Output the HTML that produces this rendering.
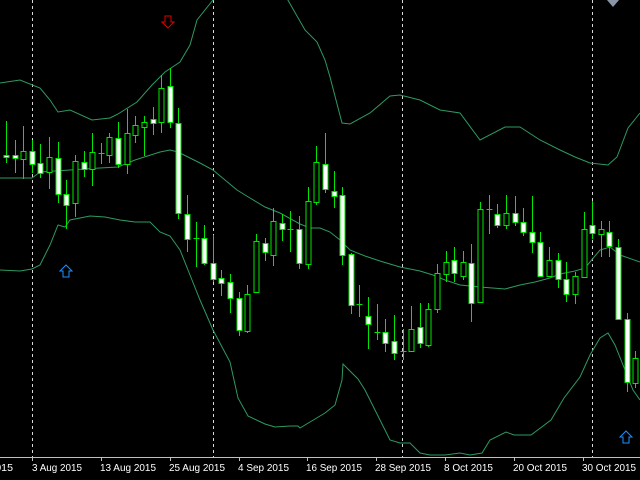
<!DOCTYPE html>
<html><head><meta charset="utf-8"><style>
html,body{margin:0;padding:0;background:#000;width:640px;height:480px;overflow:hidden}
svg{display:block}
text{font-family:"Liberation Sans",sans-serif;font-size:10.5px;fill:#fff}
</style></head><body>
<svg id="s" width="640" height="480" xmlns="http://www.w3.org/2000/svg" shape-rendering="crispEdges">
<rect width="640" height="480" fill="#000"/>
<g stroke="#d8d8d8" stroke-width="1" stroke-dasharray="3,3">
<line x1="32.5" y1="0" x2="32.5" y2="457"/>
<line x1="213.5" y1="0" x2="213.5" y2="457"/>
<line x1="402.5" y1="0" x2="402.5" y2="457"/>
<line x1="592.5" y1="0" x2="592.5" y2="457"/>
</g>
<g fill="none" stroke="#2e9a60" stroke-width="1" shape-rendering="auto">
<polyline points="0,83 20,80 40,88 50,100 58,112 70,110 92,120 110,118 118,114 137,102 152,85 165,72 180,62 190,45 197,20 213,0 225,-5 285,-5 305,30 317,42 325,60 330,77 342,123 350,124 370,113 390,96 400,95 420,100 440,110 460,113 480,140 505,127 520,127 540,140 560,150 575,157 590,163 608,165 617,157 628,128 640,113"/>
<polyline points="0,178 32,178 40,172 70,170 100,168 118,167 135,160 160,152 170,150 178,152 200,163 213,170 225,180 237,190 250,198 265,207 280,213 300,224 310,228 320,228 330,232 340,240 350,250 365,256 380,261 400,267 420,271 433,275 445,280 460,285 480,287 505,289 520,285 535,282 550,278 560,274 575,271 585,268 600,250 610,247 620,255 640,262"/>
<polyline points="0,270 20,271 32,269 40,265 50,245 58,225 65,227 70,220 90,216 105,217 120,220 135,222 150,222 160,232 170,236 180,250 190,275 200,300 213,330 230,362 238,398 248,416 265,424 275,427 290,426 298,426 300,428 310,422 325,413 335,405 342,380 343,364 358,379 365,390 390,440 400,443 410,443 420,453 430,455 445,455 460,453 470,455 482,453 490,440 506,432 514,435 531,435 551,420 564,398 580,377 590,355 600,338 608,333 615,345 625,370 633,390 640,400"/>
</g>
<g id="c"></g>
<path d="M165,16 h6 v6 h3 l-6,6 l-6,-6 h3 z" fill="none" stroke="#e00000" stroke-width="1" shape-rendering="auto"/>
<path d="M66,265 l-6,6 h3 v6 h6 v-6 h3 z" fill="none" stroke="#1e90ff" stroke-width="1" shape-rendering="auto"/>
<path d="M626,431 l-6,6 h3 v6 h6 v-6 h3 z" fill="none" stroke="#1e90ff" stroke-width="1" shape-rendering="auto"/>
<path d="M607,0 h12 l-6,7 z" fill="#8a96a8" shape-rendering="auto"/>
<rect x="0" y="457" width="640" height="23" fill="#000"/>
<line x1="0" y1="457.5" x2="640" y2="457.5" stroke="#c0c0c0"/>
<g stroke="#c0c0c0">
<line x1="32.5" y1="457" x2="32.5" y2="461"/><line x1="101.5" y1="457" x2="101.5" y2="461"/>
<line x1="170.5" y1="457" x2="170.5" y2="461"/><line x1="239.5" y1="457" x2="239.5" y2="461"/>
<line x1="307.5" y1="457" x2="307.5" y2="461"/><line x1="376.5" y1="457" x2="376.5" y2="461"/>
<line x1="445.5" y1="457" x2="445.5" y2="461"/><line x1="514.5" y1="457" x2="514.5" y2="461"/>
<line x1="583.5" y1="457" x2="583.5" y2="461"/>
</g>
<text x="-42" y="471" textLength="55" lengthAdjust="spacingAndGlyphs">23 Jul 2015</text>
<text x="32" y="471" textLength="50" lengthAdjust="spacingAndGlyphs">3 Aug 2015</text>
<text x="100" y="471" textLength="56" lengthAdjust="spacingAndGlyphs">13 Aug 2015</text>
<text x="169" y="471" textLength="56" lengthAdjust="spacingAndGlyphs">25 Aug 2015</text>
<text x="238" y="471" textLength="51" lengthAdjust="spacingAndGlyphs">4 Sep 2015</text>
<text x="306" y="471" textLength="56" lengthAdjust="spacingAndGlyphs">16 Sep 2015</text>
<text x="375" y="471" textLength="56" lengthAdjust="spacingAndGlyphs">28 Sep 2015</text>
<text x="444" y="471" textLength="49" lengthAdjust="spacingAndGlyphs">8 Oct 2015</text>
<text x="513" y="471" textLength="54" lengthAdjust="spacingAndGlyphs">20 Oct 2015</text>
<text x="582" y="471" textLength="54" lengthAdjust="spacingAndGlyphs">30 Oct 2015</text>
</svg>
<script>
var d=[
[121,163,155,157,'w'],[140,173,155,158,'w'],[126,179,151,159,'h'],[140,173,151,164,'w'],[144,178,163,173,'w'],
[137,189,157,172,'h'],[142,203,158,194,'w'],[180,229,194,205,'w'],[155,217,161,203,'h'],[151,177,162,169,'w'],
[133,186,152,169,'h'],[143,164,153,153,'d'],[133,163,137,155,'h'],[122,168,138,164,'w'],[109,174,133,164,'h'],
[116,143,125,135,'h'],[116,156,122,127,'h'],[107,135,119,123,'w'],[75,133,88,122,'h'],[68,128,86,122,'w'],
[108,219,123,213,'w'],[195,252,214,239,'w'],[222,267,238,238,'d'],[225,265,238,263,'w'],[235,282,263,279,'w'],
[270,296,278,283,'w'],[274,313,282,298,'w'],[292,336,298,330,'w'],[285,333,294,331,'h'],[234,293,241,292,'h'],
[238,261,243,252,'w'],[208,266,221,255,'h'],[214,241,223,229,'w'],[211,252,229,229,'d'],[216,269,229,263,'w'],
[187,269,201,264,'h'],[146,205,162,202,'h'],[133,193,164,189,'w'],[171,208,191,196,'w'],[187,265,195,255,'w'],
[253,314,254,305,'w'],[285,317,304,304,'d'],[297,349,316,324,'w'],[304,340,332,332,'d'],[319,352,332,343,'w'],
[315,360,341,353,'w'],[329,360,351,351,'d'],[306,352,329,351,'h'],[303,348,327,343,'w'],[303,347,309,345,'h'],
[264,313,273,309,'h'],[251,282,262,274,'h'],[247,282,260,273,'w'],[251,280,262,276,'h'],[244,322,263,303,'w'],
[202,302,209,302,'h'],[195,234,209,209,'d'],[204,228,214,225,'w'],[195,229,213,225,'h'],[196,226,213,222,'w'],
[208,236,222,232,'w'],[196,253,232,242,'w'],[232,277,242,276,'w'],[247,277,260,276,'h'],[253,288,260,279,'w'],
[262,302,279,294,'w'],[272,304,276,294,'h'],[212,277,229,277,'h'],[201,239,225,233,'w'],[221,257,229,234,'h'],
[221,257,232,246,'w'],[239,319,247,319,'w'],[313,392,319,382,'w'],[351,388,358,383,'h']];
var g=document.getElementById('c'),h='',G='#00e600';
d.forEach(function(c,i){var x=Math.round(6+8.62*i)+0.5;
h+='<line x1="'+x+'" y1="'+c[0]+'" x2="'+x+'" y2="'+c[1]+'" stroke="'+G+'"/>';
if(c[4]=='d'){h+='<line x1="'+(x-3)+'" y1="'+(c[2]+0.5)+'" x2="'+(x+3)+'" y2="'+(c[2]+0.5)+'" stroke="'+G+'"/>';}
else{h+='<rect x="'+(x-2.5)+'" y="'+(c[2]+0.5)+'" width="5" height="'+Math.max(1,c[3]-c[2])+'" fill="'+(c[4]=='w'?'#fff':'#000')+'" stroke="'+G+'"/>';}
});
g.innerHTML=h;
</script>
</body></html>
